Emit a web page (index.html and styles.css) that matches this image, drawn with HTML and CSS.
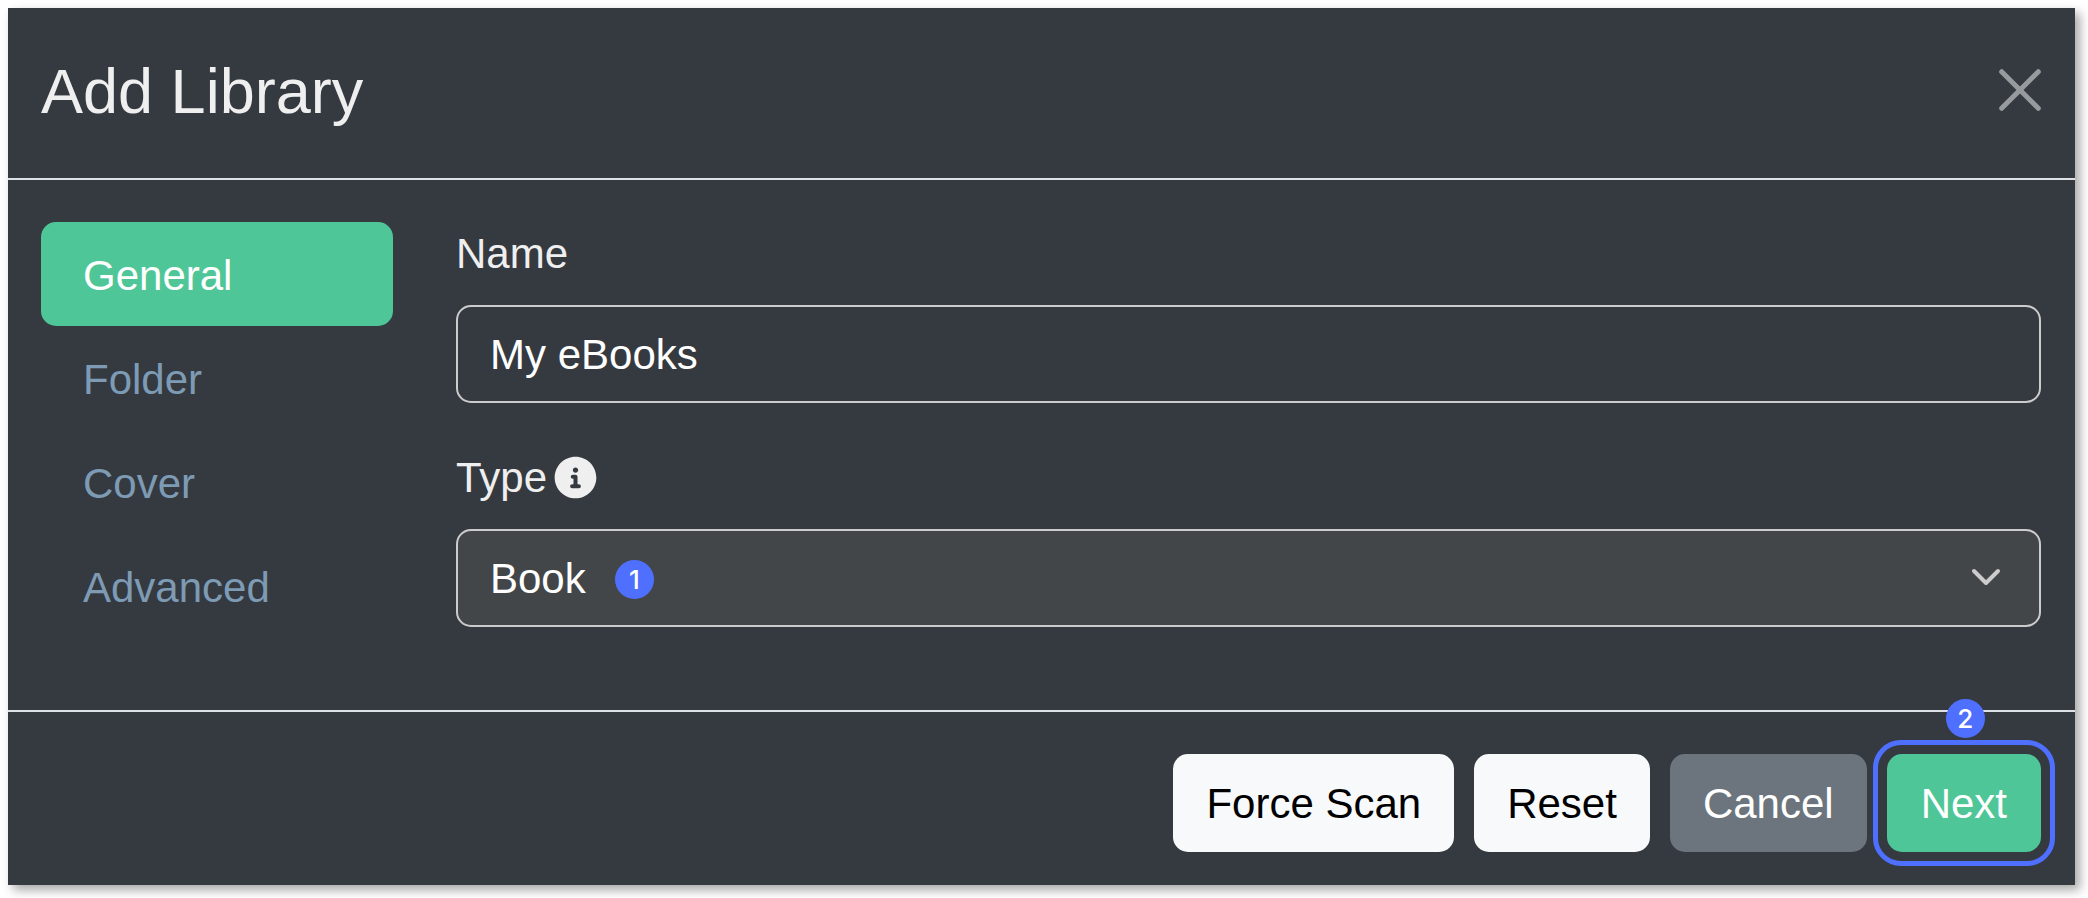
FILE: index.html
```html
<!DOCTYPE html>
<html lang="en">
<head>
    <meta charset="UTF-8">
    <meta name="viewport" content="width=device-width, initial-scale=1.0">
    <title>Add Library</title>
    <link rel="stylesheet" href="styles.css">
</head>
<body>
    <form class="modal">
        <header class="modal-header">
            <h1 class="modal-title">Add Library</h1>
            <button type="button" class="close-button" aria-label="Close">
                <svg viewBox="0 0 42 42" aria-hidden="true">
                    <path d="M2.7 2.7 39.3 39.3M39.3 2.7 2.7 39.3"/>
                </svg>
            </button>
        </header>

        <div class="modal-body">
            <nav class="tabs">
                <a href="#general" class="tab active">General</a>
                <a href="#folder" class="tab">Folder</a>
                <a href="#cover" class="tab">Cover</a>
                <a href="#advanced" class="tab">Advanced</a>
            </nav>

            <div class="fields" id="general">
                <div class="field">
                    <label for="library-name">Name</label>
                    <input type="text" id="library-name" class="control" value="My eBooks">
                </div>
                <div class="field">
                    <label for="library-type">Type
                        <svg class="info-icon" viewBox="0 0 512 512" aria-hidden="true">
                            <path d="M256 8C119 8 8 119 8 256s111 248 248 248 248-111 248-248S393 8 256 8zm0 128c18 0 32 14 32 32s-14 32-32 32-32-14-32-32 14-32 32-32zm40 248h-80c-13 0-24-11-24-24s11-24 24-24h16v-64h-8c-13 0-24-11-24-24s11-24 24-24h32c13 0 24 11 24 24v88h16c13 0 24 11 24 24s-11 24-24 24z"/>
                        </svg>
                    </label>
                    <div class="select-wrap">
                        <select id="library-type" class="control">
                            <option>Book</option>
                        </select>
                        <span class="badge badge-type">1</span>
                        <svg class="chevron" viewBox="0 0 16 16" aria-hidden="true">
                            <path d="m2 5 6 6 6-6"/>
                        </svg>
                    </div>
                </div>
            </div>
        </div>

        <footer class="modal-footer">
            <button type="button" class="btn btn-light">Force Scan</button>
            <button type="button" class="btn btn-light">Reset</button>
            <button type="button" class="btn btn-secondary">Cancel</button>
            <div class="next-wrap">
                <button type="button" class="btn btn-primary">Next</button>
                <span class="badge badge-next">2</span>
            </div>
        </footer>
    </form>
</body>
</html>
```
FILE: styles.css
```css
* {
    margin: 0;
    padding: 0;
    box-sizing: border-box;
}

body {
    background-color: #fff;
    color: #efefef;
    font-family: "Liberation Sans", Arial, sans-serif;
    font-size: 42px;
    line-height: 63px;
}

button, input, select {
    font: inherit;
}

.modal {
    margin: 8px 13px 13px 8px;
    background-color: #353a41;
    box-shadow: 5px 5px 10px rgba(0, 0, 0, 0.35);
}

/* Header */
.modal-header {
    display: flex;
    justify-content: space-between;
    align-items: center;
    padding: 44px 34px 50px 33px;
    border-bottom: 2px solid #dee2e6;
}

.modal-title {
    padding-top: 2px;
    font-size: 63px;
    font-weight: 400;
    line-height: 74px;
}

.close-button {
    width: 42px;
    height: 42px;
    border: none;
    background: none;
}

.close-button svg {
    display: block;
    fill: none;
    stroke: #979b9e;
    stroke-width: 5;
    stroke-linecap: round;
}

/* Body */
.modal-body {
    display: flex;
    gap: 63px;
    padding: 42px 34px 40px 33px;
}

.tabs {
    display: flex;
    flex-direction: column;
    flex: 0 0 352px;
}

.tab {
    padding: 22px 42px 19px;
    border-radius: 15px;
    color: #7d9bb4;
    text-decoration: none;
}

.tab.active {
    background-color: #4fc698;
    color: #fff;
}

.fields {
    flex: 1;
}

.field {
    margin-bottom: 43px;
}

.field label {
    display: flex;
    align-items: center;
    gap: 7px;
    margin-bottom: 20px;
}

.info-icon {
    width: 43px;
    height: 43px;
    fill: #efefef;
}

.control {
    display: block;
    width: 100%;
    height: 98px;
    padding: 0 32px;
    border: 2px solid #ccc;
    border-radius: 15px;
    background-color: transparent;
    color: #fff;
    appearance: none;
}

input.control {
    padding-top: 2px;
}

.select-wrap {
    position: relative;
}

.select-wrap .control {
    background-color: #434648;
}

.chevron {
    position: absolute;
    top: 32px;
    right: 39px;
    width: 32px;
    height: 32px;
    fill: none;
    stroke: #ccc;
    stroke-width: 2;
    stroke-linecap: round;
    stroke-linejoin: round;
    pointer-events: none;
}

/* Numbered step markers */
.badge {
    position: absolute;
    width: 39px;
    height: 39px;
    border-radius: 50%;
    background-color: #4f6fff;
    color: #fff;
    font-family: Inter, sans-serif;
    font-size: 26px;
    font-weight: 500;
    line-height: 39px;
    text-align: center;
}

.badge-type {
    top: 31px;
    left: 159px;
}

.badge-next {
    top: -55px;
    left: 59px;
}

/* Footer */
.modal-footer {
    display: flex;
    justify-content: flex-end;
    gap: 20px;
    padding: 42px 34px 33px;
    border-top: 2px solid #dee2e6;
}

.btn {
    height: 98px;
    padding: 0 33px;
    border: none;
    border-radius: 15px;
}

.btn-light {
    background-color: #f8f9fb;
    color: #000;
}

.btn-secondary {
    background-color: #6c757d;
    color: #fff;
}

.btn-primary {
    padding: 0 34px;
    background-color: #4fc698;
    color: #fff;
}

.next-wrap {
    position: relative;
}

.next-wrap::before {
    content: "";
    position: absolute;
    inset: -14px;
    border: 5px solid #4f6fff;
    border-radius: 28px;
    pointer-events: none;
}
```
